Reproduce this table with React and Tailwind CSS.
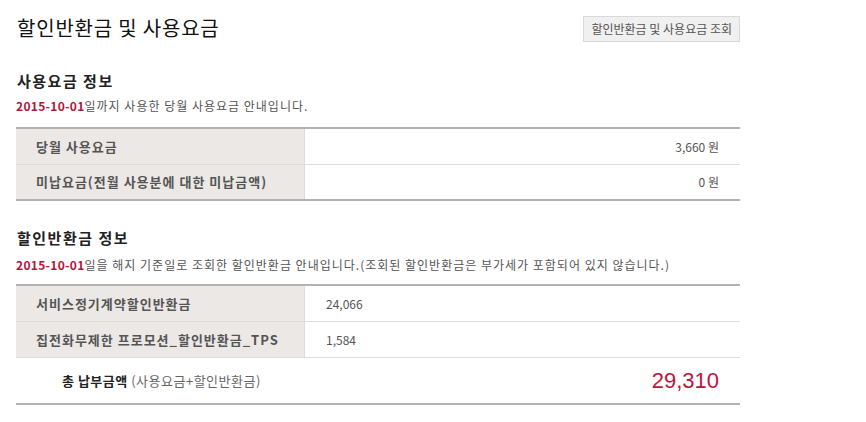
import React from "react";

const usage = [
  { label: "당월 사용요금", value: "3,660 원" },
  { label: "미납요금(전월 사용분에 대한 미납금액)", value: "0 원" },
];

const refunds = [
  { label: "서비스정기계약할인반환금", value: "24,066", h: "h-[35px]" },
  { label: "집전화무제한 프로모션_할인반환금_TPS", value: "1,584", h: "h-[36px]" },
];

const font = { fontFamily: '"Noto Sans CJK KR", "Noto Sans", sans-serif' };

const Billing = () => {
  return (
    <div className="min-h-screen bg-white pl-4 w-[740px]" style={font}>
      {/* Header */}
      <div className="flex justify-between items-start pt-[15px]">
        <h1 className="text-[20px] leading-[26px] text-[#111] pl-px tracking-[0.8px]">할인반환금 및 사용요금</h1>
        <button className="mt-px h-[26px] px-[7px] bg-[#f0f0f0] border border-[#d9d9d9] text-[12px] text-[#555]">
          할인반환금 및 사용요금 조회
        </button>
      </div>

      {/* 사용요금 정보 */}
      <h2 className="mt-[30px] text-[15px] leading-[18px] font-bold text-[#222] pl-px tracking-[1.5px]">사용요금 정보</h2>
      <p className="mt-[8px] text-[12px] leading-[16px] text-[#555] tracking-[1px]">
        <span className="font-bold text-[#b0143a] tracking-[0.3px]">2015-10-01</span>일까지 사용한 당월 사용요금 안내입니다.
      </p>
      <div className="mt-[13px] border-t-2 border-b-2 border-[#b3b3b3]">
        {usage.map((row, i) => (
          <div key={i} className={`flex h-[35px] ${i > 0 ? "border-t border-[#dddddd]" : ""}`}>
            <div className="w-[289px] bg-[#ebe8e5] border-r border-[#dddddd] flex items-center pl-5 text-[13px] font-bold text-[#555] tracking-[1px]">
              {row.label}
            </div>
            <div className="flex-1 flex items-center justify-end pr-[21px] text-[12px] text-[#555]">
              {row.value}
            </div>
          </div>
        ))}
      </div>

      {/* 할인반환금 정보 */}
      <h2 className="mt-[28px] text-[15px] leading-[18px] font-bold text-[#222] pl-px tracking-[1.5px]">할인반환금 정보</h2>
      <p className="mt-[10px] text-[12px] leading-[16px] text-[#555] tracking-[1px]">
        <span className="font-bold text-[#b0143a] tracking-[0.3px]">2015-10-01</span>일을 해지 기준일로 조회한 할인반환금 안내입니다.(조회된 할인반환금은 부가세가 포함되어 있지 않습니다.)
      </p>
      <div className="mt-[11px] border-t-2 border-b-2 border-[#b3b3b3]">
        {refunds.map((row, i) => (
          <div key={i} className={`flex ${row.h} ${i > 0 ? "border-t border-[#dddddd]" : ""}`}>
            <div className="w-[289px] bg-[#ebe8e5] border-r border-[#dddddd] flex items-center pl-5 text-[13px] font-bold text-[#555] tracking-[1px]">
              {row.label}
            </div>
            <div className="flex-1 flex items-center pl-[21px] text-[12px] text-[#555]">
              {row.value}
            </div>
          </div>
        ))}
        <div className="flex h-[46px] items-center border-t border-[#dddddd] pl-[46px] pr-[21px]">
          <div className="flex-1 text-[13px] text-[#222] tracking-[0.5px]">
            <span className="font-bold">총 납부금액</span>
            <span className="text-[#666]"> (사용요금+할인반환금)</span>
          </div>
          <div className="text-[22px] text-[#c0143c]" style={{ fontFamily: '"Liberation Sans", Arial, sans-serif' }}>
            29,310
          </div>
        </div>
      </div>
    </div>
  );
};

export default function App() {
  return <Billing />;
}
